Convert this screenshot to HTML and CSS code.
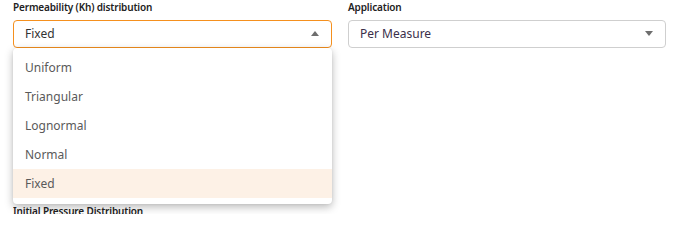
FILE: index.html
```html
<!DOCTYPE html>
<html>
<head>
<meta charset="utf-8">
<link rel="stylesheet" href="styles.css">
</head>
<body>
<div class="page">
  <div class="row">
    <div class="field">
      <div class="label">Permeability (Kh) distribution</div>
      <div class="select-wrap">
        <div class="select active">
          <span>Fixed</span>
          <svg class="caret" width="8" height="5" viewBox="0 0 8 5"><path d="M0 5 L4 0 L8 5 Z" fill="#6e6e6e"/></svg>
        </div>
        <div class="menu">
          <div class="item">Uniform</div>
          <div class="item">Triangular</div>
          <div class="item">Lognormal</div>
          <div class="item">Normal</div>
          <div class="item selected">Fixed</div>
        </div>
      </div>
    </div>
    <div class="field">
      <div class="label">Application</div>
      <div class="select">
        <span class="value">Per Measure</span>
        <svg class="caret" width="8" height="5" viewBox="0 0 8 5"><path d="M0 0 L8 0 L4 5 Z" fill="#6e6e6e"/></svg>
      </div>
    </div>
  </div>
  <div class="next">
    <div class="label clipped">Initial Pressure Distribution</div>
  </div>
</div>
</body>
</html>
```
FILE: styles.css
```css
html, body {
  margin: 0;
  padding: 0;
  background: #ffffff;
}
body {
  font-family: "Noto Sans", "Open Sans", sans-serif;
  color: #333;
}
.page {
  padding: 0 21px 0 13px;
  width: 653px;
}
.row {
  display: grid;
  grid-template-columns: 319px 318px;
  column-gap: 16px;
}
.label {
  font-size: 10px;
  font-weight: 600;
  letter-spacing: -0.15px;
  color: #222;
  height: 14px;
  line-height: 14px;
  margin-bottom: 6px;
}
.select-wrap {
  position: relative;
}
.select {
  box-sizing: border-box;
  height: 28px;
  border: 1px solid #cfcfcf;
  border-radius: 4px;
  display: flex;
  align-items: center;
  justify-content: space-between;
  padding: 0 12px 1px 11px;
  font-size: 12px;
  color: #333;
}
.select.active {
  border-color: #f5901e;
}
.value {
  color: #3b2f4a;
}
.caret {
  display: block;
}
.menu {
  position: absolute;
  left: 0;
  top: 28px;
  width: 319px;
  box-sizing: border-box;
  background: #fff;
  border-radius: 4px;
  box-shadow: 0 3px 8px rgba(0, 0, 0, 0.28), 0 0 2px rgba(0, 0, 0, 0.08);
  padding: 5px 0 6px;
  z-index: 2;
}
.item {
  height: 29px;
  line-height: 30px;
  padding-left: 12px;
  font-size: 12px;
  color: #5a5a5a;
}
.item.selected {
  background: #fdf1e6;
}
.next {
  margin-top: 157px;
  height: 9px;
  overflow: hidden;
}
.clipped {
  margin: 0;
  height: 14px;
  line-height: 14px;
  transform: translateY(-1px);
}
```
